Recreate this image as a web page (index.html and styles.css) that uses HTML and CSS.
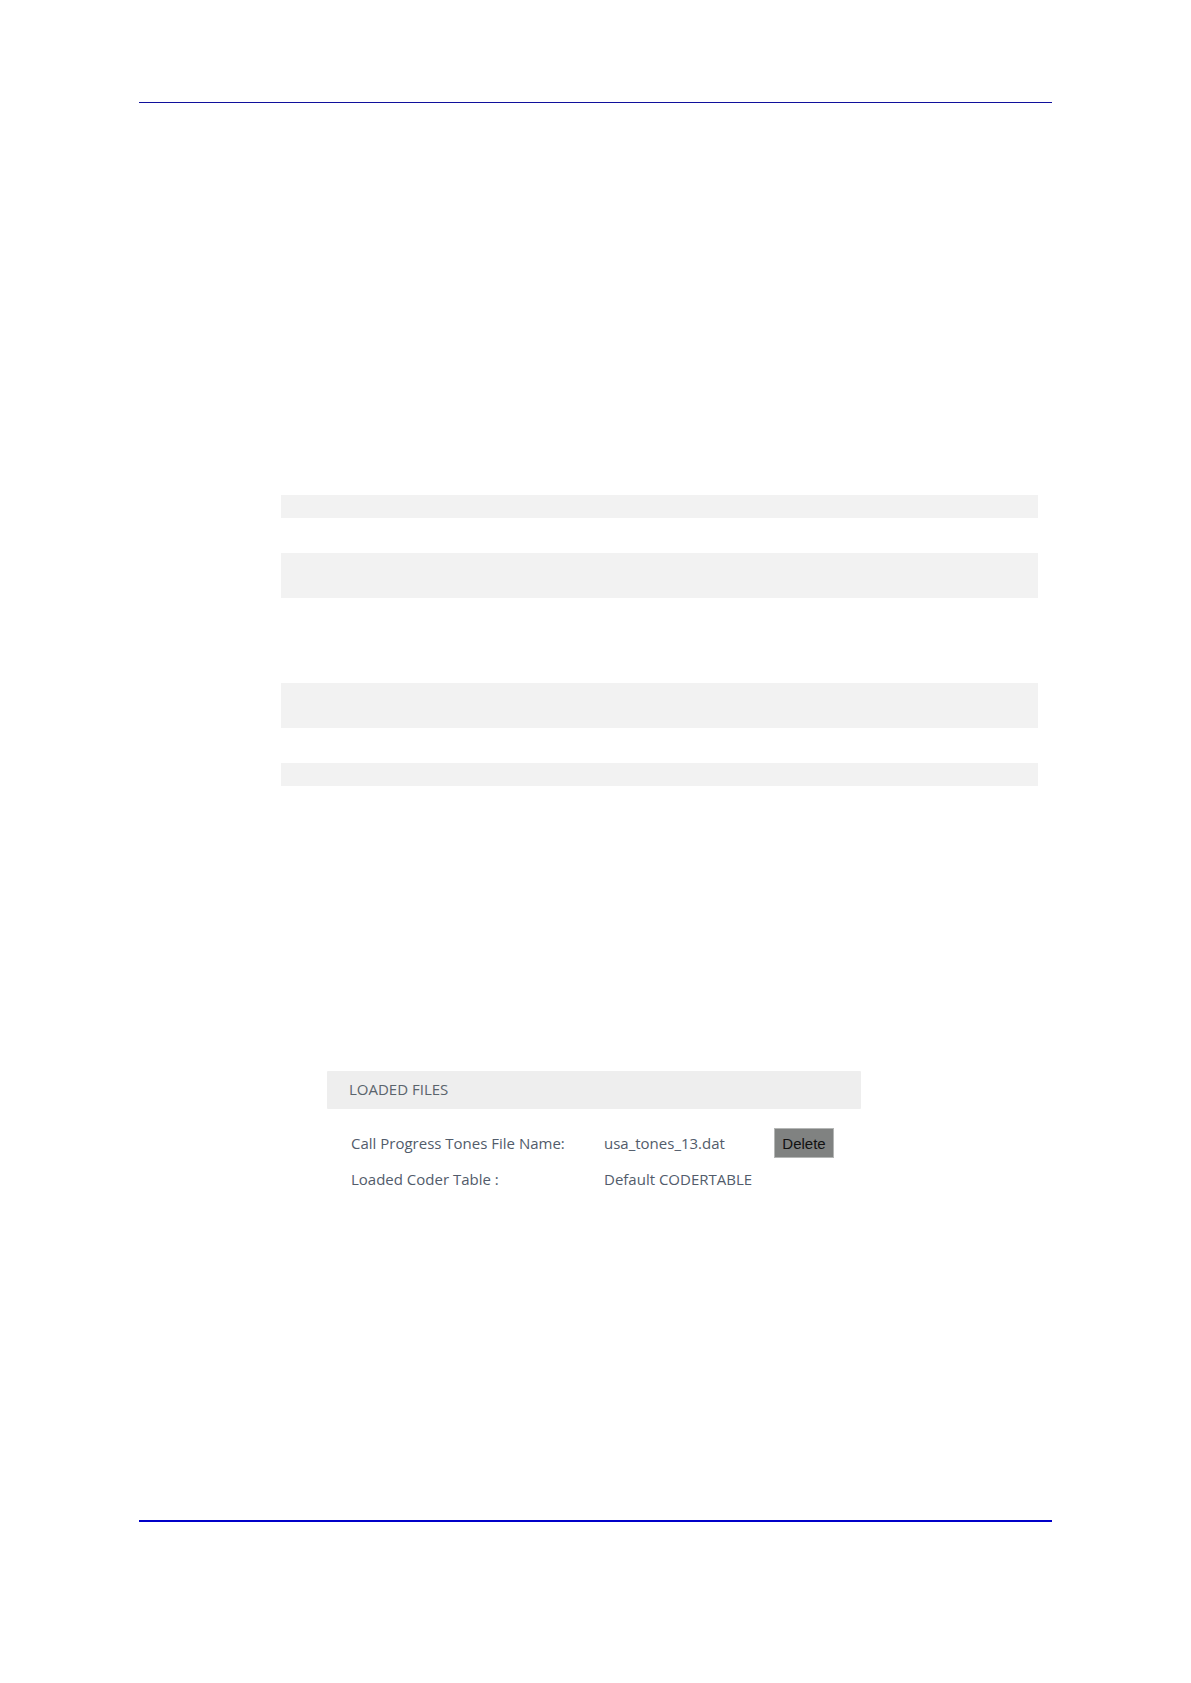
FILE: index.html
```
<!DOCTYPE html>
<html lang="en">
<head>
    <meta charset="UTF-8">
    <title>Loaded Files</title>
    <link rel="stylesheet" href="styles.css">
</head>
<body>
    <main class="page">
        <div class="code-list">
            <div class="code-block"></div>
            <div class="code-block tall"></div>
            <div class="code-block tall spaced"></div>
            <div class="code-block"></div>
        </div>

        <section class="loaded-files">
            <h2>LOADED FILES</h2>
            <table>
                <tr>
                    <th scope="row">Call Progress Tones File Name:</th>
                    <td>usa_tones_13.dat</td>
                    <td><button type="button">Delete</button></td>
                </tr>
                <tr>
                    <th scope="row">Loaded Coder Table :</th>
                    <td>Default CODERTABLE</td>
                    <td></td>
                </tr>
            </table>
        </section>
    </main>
</body>
</html>
```
FILE: styles.css
```
* {
    margin: 0;
    padding: 0;
    box-sizing: border-box;
}

body {
    min-height: 100vh;
    padding: 102px 139px 161px;
    background: #fff;
    color: #525c6b;
    font-family: "Open Sans", sans-serif;
    font-size: 15px;
    display: flex;
}

.page {
    flex: 1;
    border-top: 1px solid #10109c;
    border-bottom: 2px solid #0000c8;
}

.code-list {
    display: flex;
    flex-direction: column;
    gap: 35px;
    padding: 392px 14px 0 142px;
}

.code-block {
    height: 23px;
    background: #f2f2f2;
}

.code-block.tall {
    height: 45px;
}

.code-block.spaced {
    margin-top: 50px;
}

.loaded-files {
    max-width: 722px;
    margin-top: 285px;
    padding-left: 188px;
}

h2 {
    padding: 0 22px 2px;
    background: #eee;
    border-radius: 1px;
    color: #5a646c;
    font-size: 15px;
    font-weight: normal;
    line-height: 36px;
}

table {
    width: 100%;
    margin-top: 16px;
    border-collapse: collapse;
    table-layout: fixed;
}

th,
td {
    height: 36px;
    font-weight: normal;
    text-align: left;
    white-space: nowrap;
    vertical-align: middle;
}

th {
    width: 277px;
    padding-left: 24px;
}

td:nth-child(2) {
    width: 170px;
}

button {
    display: block;
    width: 60px;
    height: 30px;
    background: #808281;
    border: 1px solid #b4b6b5;
    color: #111;
    font-family: "Liberation Sans", Arial, sans-serif;
    font-size: 15px;
    cursor: pointer;
}
```
